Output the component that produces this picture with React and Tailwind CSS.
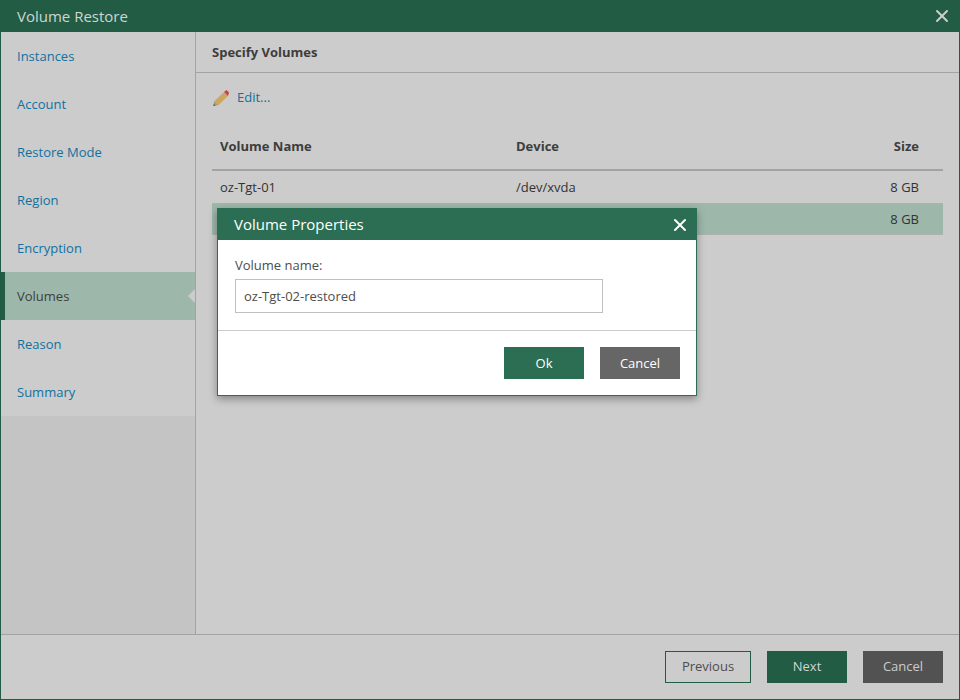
import { X } from 'lucide-react'

const steps = ['Instances', 'Account', 'Restore Mode', 'Region', 'Encryption', 'Volumes', 'Reason', 'Summary']

function PencilIcon() {
  return (
    <svg width="18" height="18" viewBox="0 0 18 18">
      <path d="M12 3 L16 7 L6.5 16 L2 12.5 Z" fill="#cda75f" />
      <path d="M12 3 L14.5 1 L17 3.5 L16 7 Z" fill="#c0444c" />
      <path d="M2 12.5 L6.5 16 L1.5 17 Z" fill="#a69a78" />
      <path d="M1.7 15 L3.6 16.5 L1.5 17 Z" fill="#4a4a4a" />
    </svg>
  )
}

function App() {
  return (
    <div className="w-[960px] h-[700px] flex flex-col bg-[#cccccc] border border-[#235c44] border-t-0 text-[13px] relative overflow-hidden" style={{ fontFamily: '"Open Sans", sans-serif' }}>
      {/* Title bar */}
      <div className="h-8 shrink-0 -mx-px bg-[#235c44] flex items-center justify-between pl-[17px] pr-[8px] text-[15px] text-[#cdd6d2]">
        <span>Volume Restore</span>
        <X className="w-5 h-5 text-[#cccccc]" strokeWidth={2.4} />
      </div>

      <div className="flex-1 flex min-h-0">
        {/* Wizard steps */}
        <div className="w-[194px] shrink-0 bg-[#c4c4c4]">
          {steps.map((step) => (
            step === 'Volumes' ? (
              <div key={step} className="h-12 bg-[#9db8aa] border-l-4 border-[#235c44] pl-3 pt-[2px] flex items-center text-[#3d3d3d] relative">
                {step}
                <div className="absolute right-0 top-[17px] w-0 h-0 border-y-[7px] border-y-transparent border-r-[7px] border-r-[#cccccc]"></div>
              </div>
            ) : (
              <div key={step} className="h-12 bg-[#cccccc] pl-4 pt-[2px] flex items-center text-[#11719f]">
                {step}
              </div>
            )
          ))}
        </div>

        {/* Main panel */}
        <div className="flex-1 border-l border-[#a3a3a3] flex flex-col min-w-0">
          <div className="h-[41px] shrink-0 border-b border-[#a3a3a3] pl-4 pt-[2px] flex items-center font-bold text-[#3d3d3d]">
            Specify Volumes
          </div>
          <div className="h-[49px] shrink-0 pl-4 flex items-center gap-[7px] text-[#11719f]">
            <PencilIcon />
            Edit...
          </div>
          <div className="pl-4 pr-4">
            <div className="h-[49px] border-b-2 border-[#a3a3a3] flex items-center pl-2 pr-6 pt-[2px] font-bold text-[#3d3d3d]">
              <div className="w-[296px]">Volume Name</div>
              <div className="flex-1">Device</div>
              <div>Size</div>
            </div>
            <div className="h-8 flex items-center pl-2 pr-6 pt-[2px] text-[#333333]">
              <div className="w-[296px]">oz-Tgt-01</div>
              <div className="flex-1">/dev/xvda</div>
              <div>8 GB</div>
            </div>
            {/* Name and device of this row sit under the dialog */}
            <div className="h-8 flex items-center justify-end pl-2 pr-6 pt-[2px] bg-[#9db8aa] border-y border-[#b0b0b0] text-[#333333]">
              <div>8 GB</div>
            </div>
          </div>
        </div>
      </div>

      {/* Footer */}
      <div className="h-[65px] shrink-0 border-t border-[#a3a3a3] flex items-center justify-end gap-4 pr-4 pb-[1px]">
        <button className="w-[86px] h-8 pt-[1px] border border-[#235c44] text-[#4d4d4d]">Previous</button>
        <button className="w-20 h-8 pt-[1px] bg-[#235c44] text-[#cdd6d2]">Next</button>
        <button className="w-20 h-8 pt-[1px] bg-[#525252] text-[#cccccc]">Cancel</button>
      </div>

      {/* Volume Properties dialog */}
      <div className="absolute left-[216px] top-[208px] w-[480px] h-[188px] bg-white border border-[#2b6e53] border-t-0 shadow-[0_3px_8px_rgba(0,0,0,0.35)] flex flex-col">
        <div className="h-8 shrink-0 -mx-px bg-[#2b6e53] flex items-center justify-between pl-[17px] pr-[7px] pt-[1px] text-[15px] text-white">
          <span>Volume Properties</span>
          <X className="w-5 h-5" strokeWidth={2.4} />
        </div>
        <div className="h-[91px] shrink-0 border-b border-[#cccccc] pl-[17px] pt-[14px] text-[#4d4d4d]">
          <div className="leading-[22px]">Volume name:</div>
          <div className="mt-[3px] w-[368px] h-[34px] border border-[#c0c0c0] pl-2 pt-[1px] flex items-center">oz-Tgt-02-restored</div>
        </div>
        <div className="flex-1 flex items-center justify-end gap-4 pr-4">
          <button className="w-20 h-8 pt-[1px] bg-[#2b6e53] text-white">Ok</button>
          <button className="w-20 h-8 pt-[1px] bg-[#666666] text-white">Cancel</button>
        </div>
      </div>
    </div>
  )
}

export default App
